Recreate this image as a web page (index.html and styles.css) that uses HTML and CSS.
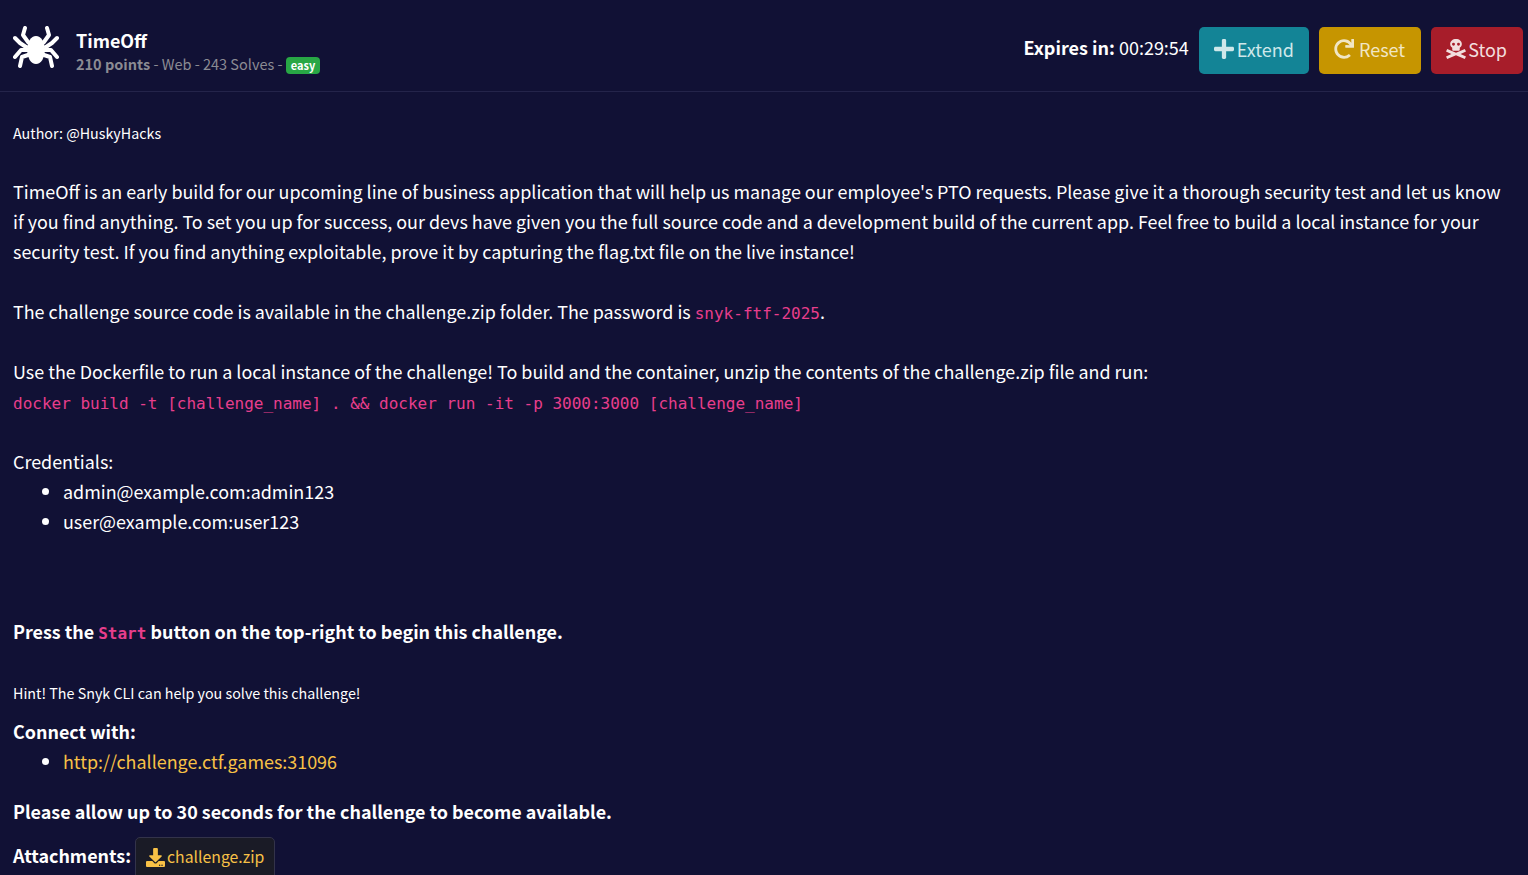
FILE: index.html
```html
<!DOCTYPE html>
<html lang="en">
<head>
    <meta charset="UTF-8">
    <meta name="viewport" content="width=device-width, initial-scale=1.0">
    <title>TimeOff</title>
    <link rel="stylesheet" href="styles.css">
</head>
<body>
    <header class="top-bar">
        <div class="title-block">
            <svg class="spider" viewBox="0 0 46 42" fill="#fff">
                <ellipse cx="23" cy="24" rx="9" ry="14"/>
                <g fill="none" stroke="#fff" stroke-width="4" stroke-linecap="round" stroke-linejoin="round">
                    <path d="M12 2l-2 7 5 7M34 2l2 7-5 7"/>
                    <path d="M2 12l5 5 6 4M44 12l-5 5-6 4"/>
                    <path d="M2 31l6-7h7M44 31l-6-7h-7"/>
                    <path d="M7 40l2-9 6-2M39 40l-2-9-6-2"/>
                </g>
            </svg>
            <div>
                <div class="challenge-name">TimeOff</div>
                <div class="challenge-meta"><b>210 points</b> - Web - 243 Solves - <span class="badge">easy</span></div>
            </div>
        </div>
        <div class="actions">
            <div class="expires"><b>Expires in:</b> 00:29:54</div>
            <button class="btn btn-extend">
                <svg class="icon" viewBox="0 32 448 448"><path d="M416 208H272V64c0-17.67-14.33-32-32-32h-32c-17.67 0-32 14.33-32 32v144H32c-17.67 0-32 14.33-32 32v32c0 17.67 14.33 32 32 32h144v144c0 17.67 14.33 32 32 32h32c17.67 0 32-14.33 32-32V304h144c17.67 0 32-14.33 32-32v-32c0-17.67-14.33-32-32-32z"/></svg>Extend
            </button>
            <button class="btn btn-reset">
                <svg class="icon" viewBox="0 0 512 512"><path d="M500.33 0h-47.41a12 12 0 0 0-12 12.57l4 82.76A247.42 247.42 0 0 0 256 8C119.34 8 8.19 119.53 8 256.19 7.81 393.07 118.82 504 256 504a247.1 247.1 0 0 0 166.18-63.91 12 12 0 0 0 .48-17.43l-34-34a12 12 0 0 0-16.38-.55A176 176 0 1 1 402.1 157.8l-101.53-4.87a12 12 0 0 0-12.57 12v47.41a12 12 0 0 0 12 12h200.33a12 12 0 0 0 12-12V12a12 12 0 0 0-12-12z"/></svg>Reset
            </button>
            <button class="btn btn-stop">
                <svg class="icon" viewBox="0 0 48 48"><path fill-rule="evenodd" d="M24 0c-8 0-14 5-14 12 0 4 2 7 5 9v4c0 2 1 3 3 3h12c2 0 3-1 3-3v-4c3-2 5-5 5-9 0-7-6-12-14-12zm-6 9a3.500 3.500 0 1 1 0 7 3.500 3.500 0 0 1 0-7zm12 0a3.500 3.500 0 1 1 0 7 3.500 3.500 0 0 1 0-7z"/><path d="M3 24l21 9 21-9 3 6-13 6 13 6-3 6-21-9-21 9-3-6 13-6-13-6z"/></svg>Stop
            </button>
        </div>
    </header>

    <main class="content">
        <p class="small author">Author: @HuskyHacks</p>
        <p>TimeOff is an early build for our upcoming line of business application that will help us manage our employee's PTO requests. Please give it a thorough security test and let us know if you find anything. To set you up for success, our devs have given you the full source code and a development build of the current app. Feel free to build a local instance for your security test. If you find anything exploitable, prove it by capturing the flag.txt file on the live instance!</p>
        <p>The challenge source code is available in the challenge.zip folder. The password is <code>snyk-ftf-2025</code>.</p>
        <p>Use the Dockerfile to run a local instance of the challenge! To build and the container, unzip the contents of the challenge.zip file and run:<br>
        <code>docker build -t [challenge_name] . &amp;&amp; docker run -it -p 3000:3000 [challenge_name]</code></p>
        <p class="list-label">Credentials:</p>
        <ul>
            <li>admin@example.com:admin123</li>
            <li>user@example.com:user123</li>
        </ul>
        <p class="start-note"><b>Press the <code>Start</code> button on the top-right to begin this challenge.</b></p>
        <p class="small hint">Hint! The Snyk CLI can help you solve this challenge!</p>
        <p class="list-label"><b>Connect with:</b></p>
        <ul>
            <li><a href="#">http://challenge.ctf.games:31096</a></li>
        </ul>
        <p class="allow"><b>Please allow up to 30 seconds for the challenge to become available.</b></p>
        <div class="attachments">
            <b class="attachments-label">Attachments:</b>
            <a class="file" href="#">
                <svg class="icon" viewBox="0 0 512 512"><path d="M216 0h80c13.300 0 24 10.700 24 24v168h87.700c17.800 0 26.700 21.500 14.100 34.100L269.700 378.300c-7.500 7.500-19.800 7.500-27.300 0L90.100 226.100c-12.600-12.600-3.700-34.100 14.100-34.100H192V24c0-13.300 10.700-24 24-24zm296 376v112c0 13.300-10.700 24-24 24H24c-13.300 0-24-10.700-24-24V376c0-13.300 10.700-24 24-24h146.700l49 49c20.100 20.100 52.500 20.100 72.600 0l49-49H488c13.300 0 24 10.700 24 24zm-124 88c0-11-9-20-20-20s-20 9-20 20 9 20 20 20 20-9 20-20zm64 0c0-11-9-20-20-20s-20 9-20 20 9 20 20 20 20-9 20-20z"/></svg>challenge.zip
            </a>
        </div>
    </main>
</body>
</html>
```

FILE: styles.css
```css
html, body {
    height: 100%;
}
body {
    margin: 0;
    overflow: hidden;
    background-color: #111135;
    color: #fff;
    font-family: "Noto Sans CJK JP", "Open Sans", sans-serif;
    font-size: 17.92px;
    line-height: 30px;
}
b {
    font-weight: 700;
}
.top-bar {
    display: flex;
    justify-content: space-between;
    align-items: center;
    height: 91px;
    padding: 0 5px 0 13px;
    border-bottom: 1px solid #24244a;
}
.title-block {
    display: flex;
    align-items: center;
    gap: 17px;
    padding-top: 12px;
}
.spider {
    width: 46px;
    height: 42px;
    margin-top: -10px;
}
.challenge-name {
    font-size: 17.92px;
    font-weight: 700;
    line-height: 24px;
}
.challenge-meta {
    margin-top: 1px;
    font-size: 14.5px;
    line-height: 22px;
    color: #8b8b93;
}
.badge {
    display: inline-block;
    padding: 0 5px;
    background-color: #28a745;
    border-radius: 4px;
    color: #fff;
    font-size: 11px;
    font-weight: 700;
    line-height: 17px;
}
.actions {
    display: flex;
    align-items: center;
    gap: 10px;
    padding-top: 10px;
}
.expires {
    font-size: 18px;
    margin-bottom: 7px;
}
.btn {
    display: flex;
    align-items: center;
    height: 47px;
    padding: 0 14px 4px;
    border: 1px solid transparent;
    border-radius: 5px;
    font-family: inherit;
    font-size: 18px;
}
.btn .icon {
    width: 20px;
    height: 20px;
    margin-right: 3px;
    fill: currentColor;
}
.btn-extend {
    background-color: #138496;
    color: #cfe8ea;
}
.btn-reset {
    padding-right: 15px;
    background-color: #c69500;
    color: #f1e6c4;
}
.btn-reset .icon {
    margin-right: 5px;
}
.btn-stop {
    padding-right: 15px;
    background-color: #a71d2a;
    color: #f2dede;
}
.btn-stop .icon {
    margin-right: 2px;
}
.content {
    padding: 26px 13px 0;
}
p {
    margin: 0 0 30px;
}
p.small {
    font-size: 14.3px;
}
.author {
    margin-bottom: 28px;
}
code {
    color: #e83e8c;
    font-family: "DejaVu Sans Mono", monospace;
    font-size: 16px;
    line-height: 1;
}
ul {
    margin: 0;
    padding-left: 50px;
}
.list-label {
    margin-bottom: 0;
}
.start-note {
    margin-top: 80px;
    margin-bottom: 32px;
}
.hint {
    margin-bottom: 8px;
}
.allow {
    margin-top: 20px;
    margin-bottom: 11px;
}
a {
    color: #f8c146;
    text-decoration: none;
}
.attachments {
    display: flex;
    align-items: center;
    gap: 4px;
}
.attachments-label {
    margin-bottom: 9px;
}
.file {
    display: flex;
    align-items: center;
    height: 38px;
    padding: 0 10px 4px;
    background-color: #1a1b26;
    border: 1px solid #33334a;
    border-radius: 5px;
    font-size: 15.8px;
}
.file .icon {
    width: 19px;
    height: 19px;
    margin-right: 2px;
    fill: currentColor;
}
```
